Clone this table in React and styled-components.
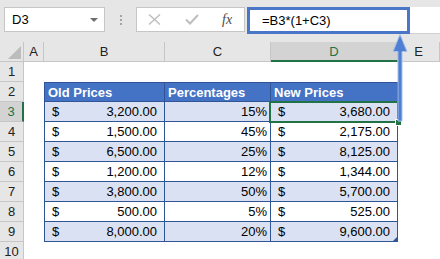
import React from 'react';
import styled, { createGlobalStyle } from 'styled-components';

const GlobalStyle = createGlobalStyle`
  body {
    margin: 0;
    background: #fff;
    font-family: "Liberation Sans", Arial, sans-serif;
  }
`;

const columns = [
  { key: 'A', width: 20 },
  { key: 'B', width: 121 },
  { key: 'C', width: 106 },
  { key: 'D', width: 127 },
  { key: 'E', width: 42 },
];

const oldPrices = ['3,200.00', '1,500.00', '6,500.00', '1,200.00', '3,800.00', '500.00', '8,000.00'];
const percents = ['15%', '45%', '25%', '12%', '50%', '5%', '20%'];
const newPrices = ['3,680.00', '2,175.00', '8,125.00', '1,344.00', '5,700.00', '525.00', '9,600.00'];

const App = () => {
  const rows = [];
  for (let r = 1; r <= 10; r++) rows.push(r);

  return (
    <>
      <GlobalStyle />
      <Sheet>
        <FormulaBar>
          <NameBox>
            D3
            <DropArrow />
          </NameBox>
          <Dots>
            <i />
            <i />
            <i />
          </Dots>
          <ButtonBox>
            <svg width="13" height="11" viewBox="0 0 13 11">
              <path d="M1 0.5 L12 10.5 M12 0.5 L1 10.5" stroke="#bdbdbd" strokeWidth="1.4" />
            </svg>
            <svg width="14" height="11" viewBox="0 0 14 11">
              <path d="M1 5.5 L5 9.5 L13 1" stroke="#bdbdbd" strokeWidth="2" fill="none" />
            </svg>
            <Fx>fx</Fx>
          </ButtonBox>
          <FormulaInput>
            <FormulaBox>=B3*(1+C3)</FormulaBox>
          </FormulaInput>
        </FormulaBar>

        <HeaderRow>
          <Corner>
            <svg width="24" height="20" viewBox="0 0 24 20">
              <path d="M8 17 L21 17 L21 4 Z" fill="#bcbcbc" />
            </svg>
          </Corner>
          {columns.map((c) => (
            <ColHead key={c.key} $w={c.width} $active={c.key === 'D'}>
              {c.key}
            </ColHead>
          ))}
        </HeaderRow>

        {rows.map((r) => {
          const i = r - 3;
          const inTable = r >= 2 && r <= 9;
          const isHead = r === 2;
          const band = r % 2 === 1;
          return (
            <Row key={r}>
              <RowHead $active={r === 3}>{r}</RowHead>
              <Cell $w={20} />
              {inTable ? (
                <>
                  <TCell $w={121} $head={isHead} $band={band} $first $top={isHead}>
                    {isHead ? (
                      'Old Prices'
                    ) : (
                      <Money>
                        <span>$</span>
                        <span>{oldPrices[i]}</span>
                      </Money>
                    )}
                  </TCell>
                  <TCell $w={106} $head={isHead} $band={band} $top={isHead} $right={!isHead}>
                    {isHead ? 'Percentages' : percents[i]}
                  </TCell>
                  <TCell $w={127} $head={isHead} $band={band} $top={isHead} $selected={r === 3} $corner={r === 9}>
                    {isHead ? (
                      'New Prices'
                    ) : (
                      <Money>
                        <span>$</span>
                        <span>{newPrices[i]}</span>
                      </Money>
                    )}
                  </TCell>
                </>
              ) : (
                <>
                  <Cell $w={121} />
                  <Cell $w={106} />
                  <Cell $w={127} />
                </>
              )}
              <Cell $w={42} />
            </Row>
          );
        })}

        <Arrow width="18" height="92" viewBox="0 0 18 92">
          <path
            d="M9 1.5 L16 18.5 L11 18.5 L11 88 L7 88 L7 18.5 L2 18.5 Z"
            fill="#4f7fd2"
            stroke="#a8bfe9"
            strokeWidth="1"
          />
        </Arrow>
      </Sheet>
    </>
  );
};

const Sheet = styled.div`
  position: relative;
  width: 440px;
  height: 259px;
  overflow: hidden;
  background: #fff;
  color: #000;
  font-size: 13px;
`;

const FormulaBar = styled.div`
  display: flex;
  align-items: flex-start;
  height: 42px;
  box-sizing: border-box;
  padding: 7px 0 0 4px;
  background: #e6e6e6;
`;

const NameBox = styled.div`
  position: relative;
  width: 101px;
  height: 25px;
  box-sizing: border-box;
  border: 1px solid #c6c6c6;
  background: #fff;
  padding-left: 7px;
  line-height: 23px;
  font-size: 13px;
`;

const DropArrow = styled.span`
  position: absolute;
  right: 6px;
  top: 10px;
  width: 0;
  height: 0;
  border-left: 4px solid transparent;
  border-right: 4px solid transparent;
  border-top: 4px solid #6e6e6e;
`;

const Dots = styled.div`
  width: 31px;
  height: 25px;
  display: flex;
  flex-direction: column;
  align-items: center;
  justify-content: center;
  gap: 2px;

  i {
    display: block;
    width: 2px;
    height: 2px;
    background: #a6a6a6;
  }
`;

const ButtonBox = styled.div`
  width: 109px;
  height: 25px;
  box-sizing: border-box;
  border: 1px solid #c6c6c6;
  background: #fff;
  display: flex;
  align-items: center;
  padding-left: 11px;
  gap: 24px;
`;

const Fx = styled.span`
  font-family: "Liberation Serif", "Times New Roman", serif;
  font-style: italic;
  font-size: 14px;
  color: #4a4a4a;
  margin-left: -1px;
`;

const FormulaInput = styled.div`
  flex: 1;
  height: 27px;
  margin-left: 2px;
  background: #fff;
  border-bottom: 1px solid #d0d0d0;
  box-sizing: border-box;
`;

const FormulaBox = styled.div`
  width: 163px;
  height: 27px;
  box-sizing: border-box;
  border: 3px solid #4a76c8;
  padding-left: 12px;
  line-height: 21px;
  font-size: 13px;
`;

const HeaderRow = styled.div`
  display: flex;
  height: 20px;
`;

const Corner = styled.div`
  width: 24px;
  height: 20px;
  box-sizing: border-box;
  background: #e6e6e6;
  border-right: 1px solid #c6c6c6;
  border-bottom: 1px solid #c6c6c6;
  svg {
    display: block;
  }
`;

const ColHead = styled.div`
  width: ${(p) => p.$w}px;
  flex-shrink: 0;
  height: 20px;
  box-sizing: border-box;
  background: ${(p) => (p.$active ? '#d3d3d3' : '#e6e6e6')};
  border-right: 1px solid #c6c6c6;
  border-bottom: ${(p) => (p.$active ? '2px solid #217346' : '1px solid #c6c6c6')};
  color: ${(p) => (p.$active ? '#217346' : '#222')};
  text-align: center;
  line-height: 19px;
`;

const Row = styled.div`
  display: flex;
  height: 20px;
`;

const RowHead = styled.div`
  width: 24px;
  flex-shrink: 0;
  height: 20px;
  box-sizing: border-box;
  background: ${(p) => (p.$active ? '#d3d3d3' : '#e6e6e6')};
  border-right: ${(p) => (p.$active ? '2px solid #217346' : '1px solid #c6c6c6')};
  border-bottom: 1px solid #c6c6c6;
  color: ${(p) => (p.$active ? '#217346' : '#222')};
  text-align: center;
  line-height: 20px;
`;

const Cell = styled.div`
  width: ${(p) => p.$w}px;
  flex-shrink: 0;
  height: 20px;
`;

const TCell = styled.div`
  position: relative;
  width: ${(p) => p.$w}px;
  flex-shrink: 0;
  height: 20px;
  box-sizing: border-box;
  padding: 0 3px;
  line-height: 20px;
  white-space: nowrap;
  background: ${(p) => (p.$head ? '#4472c4' : p.$band ? '#d9e1f2' : '#fff')};
  color: ${(p) => (p.$head ? '#fff' : '#000')};
  font-weight: ${(p) => (p.$head ? 700 : 400)};
  text-align: ${(p) => (p.$right ? 'right' : 'left')};
  border-right: 1px solid #2f5597;
  border-bottom: 1px solid #2f5597;
  border-left: ${(p) => (p.$first ? '1px solid #2f5597' : 'none')};
  border-top: ${(p) => (p.$top ? '1px solid #2f5597' : 'none')};

  ${(p) =>
    p.$selected &&
    `
    &::after {
      content: '';
      position: absolute;
      left: -2px;
      top: -1px;
      right: -2px;
      bottom: -2px;
      border: 2px solid #217346;
      z-index: 2;
    }
    &::before {
      content: '';
      position: absolute;
      right: -5px;
      bottom: -5px;
      width: 5px;
      height: 5px;
      background: #217346;
      border: 1px solid #fff;
      z-index: 3;
    }
  `}

  ${(p) =>
    p.$corner &&
    `
    &::after {
      content: '';
      position: absolute;
      right: 0;
      bottom: 0;
      width: 0;
      height: 0;
      border-left: 4px solid transparent;
      border-bottom: 4px solid #2f5597;
    }
  `}
`;

const Money = styled.div`
  display: flex;
  justify-content: space-between;
  padding: 0 4px 0 4px;
`;

const Arrow = styled.svg`
  position: absolute;
  left: 391px;
  top: 33px;
  z-index: 5;
`;

export default App;
